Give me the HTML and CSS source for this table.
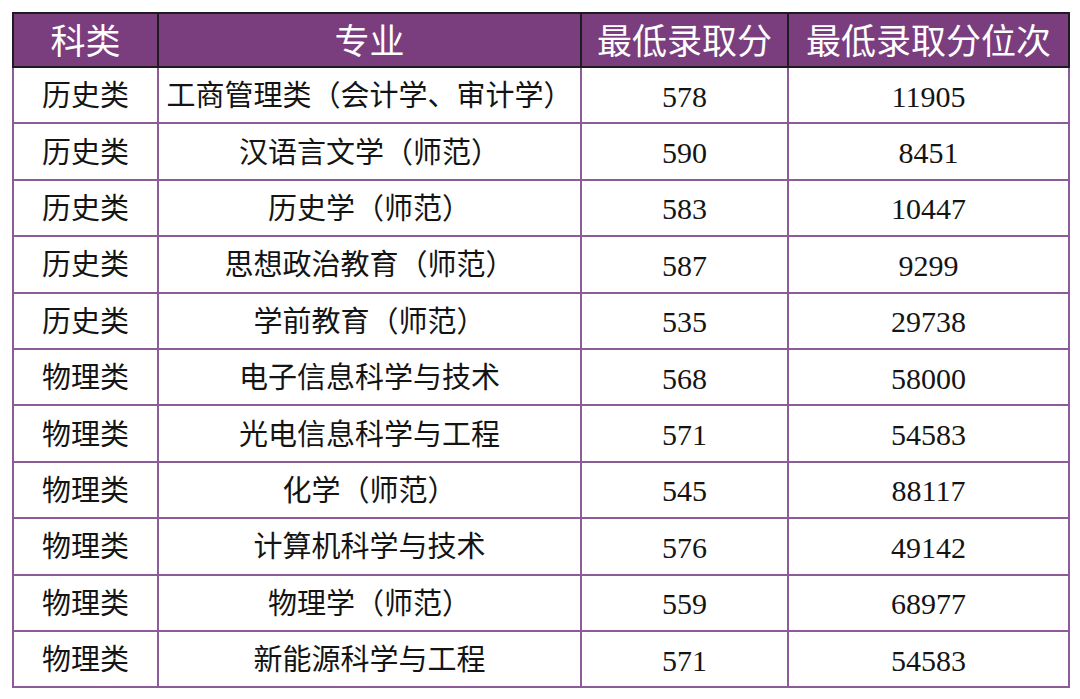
FILE: index.html
```html
<!DOCTYPE html>
<html lang="zh-CN">
<head>
<meta charset="utf-8">
<link rel="stylesheet" href="styles.css">
</head>
<body>
<table class="score-table">
  <colgroup>
    <col class="c1"><col class="c2"><col class="c3"><col class="c4">
  </colgroup>
  <thead>
    <tr><th>科类</th><th>专业</th><th>最低录取分</th><th>最低录取分位次</th></tr>
  </thead>
  <tbody>
    <tr><td>历史类</td><td>工商管理类（会计学、审计学）</td><td class="num">578</td><td class="num">11905</td></tr>
    <tr><td>历史类</td><td>汉语言文学（师范）</td><td class="num">590</td><td class="num">8451</td></tr>
    <tr><td>历史类</td><td>历史学（师范）</td><td class="num">583</td><td class="num">10447</td></tr>
    <tr><td>历史类</td><td>思想政治教育（师范）</td><td class="num">587</td><td class="num">9299</td></tr>
    <tr><td>历史类</td><td>学前教育（师范）</td><td class="num">535</td><td class="num">29738</td></tr>
    <tr><td>物理类</td><td>电子信息科学与技术</td><td class="num">568</td><td class="num">58000</td></tr>
    <tr><td>物理类</td><td>光电信息科学与工程</td><td class="num">571</td><td class="num">54583</td></tr>
    <tr><td>物理类</td><td>化学（师范）</td><td class="num">545</td><td class="num">88117</td></tr>
    <tr><td>物理类</td><td>计算机科学与技术</td><td class="num">576</td><td class="num">49142</td></tr>
    <tr><td>物理类</td><td>物理学（师范）</td><td class="num">559</td><td class="num">68977</td></tr>
    <tr><td>物理类</td><td>新能源科学与工程</td><td class="num">571</td><td class="num">54583</td></tr>
  </tbody>
</table>
</body>
</html>
```
FILE: styles.css
```css
html, body {
  margin: 0;
  padding: 0;
  background: #ffffff;
}
body {
  padding: 12px 0 0 12px;
  font-family: "Liberation Serif", "Noto Sans CJK SC", serif;
  text-spacing-trim: space-all;
}
.score-table {
  border-collapse: collapse;
  width: 1056px;
  table-layout: fixed;
}
.c1 { width: 145px; }
.c2 { width: 423px; }
.c3 { width: 207px; }
.c4 { width: 281px; }
.score-table th {
  background: #7a3e7e;
  color: #ffffff;
  font-weight: normal;
  font-size: 35px;
  height: 48px;
  padding: 4px 0 0;
  border: 2px solid #1e1a20;
  text-align: center;
  vertical-align: middle;
  line-height: 1;
  text-spacing-trim: space-all;
}
.score-table td {
  font-size: 29px;
  color: #141414;
  height: 51.4px;
  padding: 3px 0 0;
  border: 2px solid #8d5b98;
  text-align: center;
  vertical-align: middle;
  line-height: 1;
  white-space: nowrap;
  text-spacing-trim: space-all;
}
.score-table td.num {
  font-size: 30px;
}
.score-table tbody tr:first-child td {
  border-top-color: #1e1a20;
}
```
